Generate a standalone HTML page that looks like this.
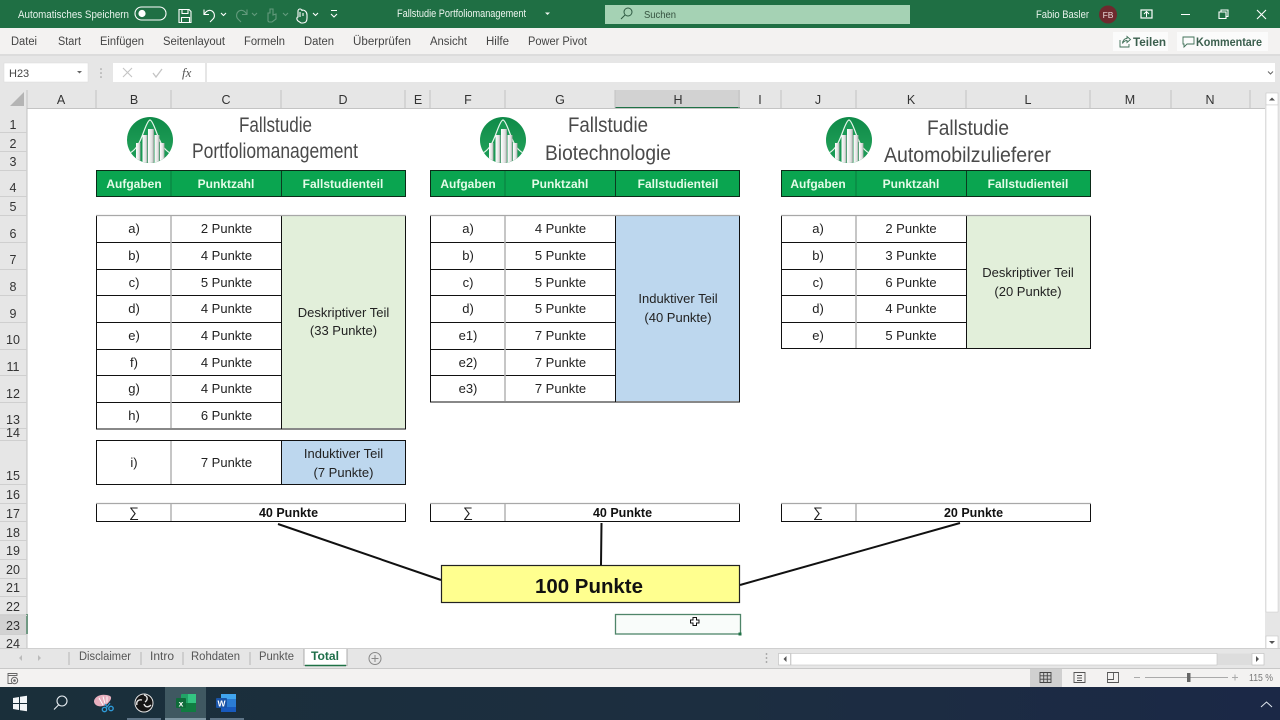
<!DOCTYPE html>
<html><head><meta charset="utf-8"><title>Fallstudie Portfoliomanagement</title>
<style>
html,body{margin:0;padding:0;width:1280px;height:720px;overflow:hidden;background:#fff}
svg{display:block}
text{font-family:"Liberation Sans",sans-serif}
.c{text-anchor:middle}
.t{font-size:13px;fill:#222;text-anchor:middle}
.b{font-size:12px;font-weight:bold;fill:#e4fbe8;text-anchor:middle}
.s{font-size:12.5px;font-weight:bold;fill:#111;text-anchor:middle}
.h{font-size:12.5px;fill:#333;text-anchor:middle}
.m{font-size:11.5px;fill:#444}
.tt{font-size:21px;fill:#4a4a4a}
.w{fill:none;stroke:#fff;stroke-width:1.1}
</style></head><body>
<svg width="1280" height="720" viewBox="0 0 1280 720" xmlns="http://www.w3.org/2000/svg">
<defs>
<linearGradient id="lg" x1="0" y1="0" x2="0" y2="1"><stop offset="0" stop-color="#0e8a48"/><stop offset="1" stop-color="#26a55c"/></linearGradient>
<linearGradient id="bar" x1="0" y1="0" x2="1" y2="0"><stop offset="0" stop-color="#fff"/><stop offset=".7" stop-color="#ddd"/><stop offset="1" stop-color="#8a9a90"/></linearGradient>
<linearGradient id="tb" x1="0" y1="0" x2="1" y2="0"><stop offset="0" stop-color="#1a2f3a"/><stop offset=".55" stop-color="#1c2e40"/><stop offset="1" stop-color="#1b2846"/></linearGradient>
<clipPath id="cp"><circle cx="0" cy="0" r="23"/></clipPath>
<g id="logo">
<circle r="23" fill="url(#lg)"/>
<g clip-path="url(#cp)">
<path d="M-23 16 C-14 10 -10 2 -6 -9 C-3 -17 -1 -20 0 -20 C1 -20 3 -17 6 -9 C10 2 14 10 23 16 L23 24 L-23 24Z" fill="#1a9a55"/>
<path d="M-20 13 C-13 9 -10 2 -6 -9 C-3 -17 -1 -20 0 -20 C1 -20 3 -17 6 -9 C10 2 13 9 20 13" fill="none" stroke="#e8f6ec" stroke-width="1.2"/>
<rect x="-14" y="3" width="4.5" height="20" fill="url(#bar)"/>
<rect x="-7.5" y="-5" width="5" height="28" fill="url(#bar)"/>
<rect x="-2" y="-11" width="6" height="34" fill="url(#bar)"/>
<rect x="4.5" y="-5" width="5" height="28" fill="url(#bar)"/>
<rect x="10" y="3" width="4.5" height="20" fill="url(#bar)"/>
</g></g>
</defs>

<!-- chrome backgrounds -->
<rect width="1280" height="28" fill="#1f6f44"/>
<rect y="28" width="1280" height="26" fill="#f3f2f1"/>
<rect y="54" width="1280" height="54" fill="#e6e6e6"/>
<rect y="54" width="1280" height="2" fill="#dcdcdc"/>

<!-- title bar -->
<text x="18" y="18" font-size="11" fill="#e8f3ec" textLength="111" lengthAdjust="spacingAndGlyphs">Automatisches Speichern</text>
<rect x="135" y="7" width="31" height="13" rx="6.5" fill="none" stroke="#fff" stroke-width="1.1"/>
<circle cx="142" cy="13.5" r="3.6" fill="#fff"/>
<path class="w" d="M179 9.5h10l2 2v11h-12z M182 9.5v4h6v-4 M181.500 22.500v-5h8v5"/>
<path class="w" stroke-width="1.3" d="M204 9.500v5h5 M204.500 14c2-3.500 5-4.500 7.500-3 3 2 3 6 1 8l-3 3"/>
<path class="w" d="M221 13l2.500 2.500 2.500-2.500"/>
<g opacity=".3"><path class="w" d="M247 9.500v5h-5 M246.500 14c-2-3.500-5-4.500-7.500-3-3 2-3 6-1 8l3 3"/><path class="w" d="M252 13l2.500 2.500 2.500-2.500"/>
<path class="w" d="M268 21v-8h2v-4h3v6l3-1v5l-4 3h-3z"/><path class="w" d="M283 13l2.500 2.500 2.500-2.500"/></g>
<path class="w" d="M298 21c-2-2-1-4 0-4v-6a2 2 0 0 1 4 0l0-1c3 0 5 2 5 5v3c0 3-1 5-4 5h-2z M300 12v5 M303 13v3"/>
<path class="w" d="M313 13l2.500 2.500 2.500-2.500"/>
<path class="w" d="M331 10.500h6 M331 14l3 3 3-3"/>
<text x="397" y="17" font-size="11" fill="#eef6f0" textLength="129" lengthAdjust="spacingAndGlyphs">Fallstudie Portfoliomanagement</text>
<path d="M545 12.500h5l-2.500 2.500z" fill="#eef6f0"/>
<rect x="605" y="5" width="305" height="19" fill="#a5d2b4"/>
<circle cx="628" cy="12" r="4" fill="none" stroke="#2e5a42" stroke-width="1"/><path d="M625 15l-4 4" stroke="#2e5a42" stroke-width="1"/>
<text x="644" y="18" font-size="10.500" fill="#35513f" textLength="32" lengthAdjust="spacingAndGlyphs">Suchen</text>
<text x="1036" y="18" font-size="11" fill="#e8f3ec" textLength="53" lengthAdjust="spacingAndGlyphs">Fabio Basler</text>
<circle cx="1108" cy="14.500" r="9" fill="#6e2a2e"/>
<text x="1108" y="18" class="c" font-size="8.500" fill="#eadada">FB</text>
<rect x="1141" y="10" width="11" height="8" fill="none" stroke="#fff" stroke-width="1.2"/><path d="M1146.500 17v-5M1144 14l2.500-2.500 2.500 2.500" fill="none" stroke="#fff" stroke-width="1"/>
<path d="M1181 14.500h9" stroke="#fff" stroke-width="1"/>
<path class="w" d="M1219 12h7v6.500h-7z M1221 12v-2h7v6.500h-2"/>
<path class="w" d="M1257 10l9 9M1266 10l-9 9" stroke-width="1.1"/>

<!-- ribbon tabs -->
<g font-size="11.500" fill="#444">
<text x="11" y="45" textLength="26" lengthAdjust="spacingAndGlyphs">Datei</text>
<text x="58" y="45" textLength="23" lengthAdjust="spacingAndGlyphs">Start</text>
<text x="100" y="45" textLength="44" lengthAdjust="spacingAndGlyphs">Einfügen</text>
<text x="163" y="45" textLength="62" lengthAdjust="spacingAndGlyphs">Seitenlayout</text>
<text x="244" y="45" textLength="41" lengthAdjust="spacingAndGlyphs">Formeln</text>
<text x="304" y="45" textLength="30" lengthAdjust="spacingAndGlyphs">Daten</text>
<text x="353" y="45" textLength="58" lengthAdjust="spacingAndGlyphs">Überprüfen</text>
<text x="430" y="45" textLength="37" lengthAdjust="spacingAndGlyphs">Ansicht</text>
<text x="486" y="45" textLength="23" lengthAdjust="spacingAndGlyphs">Hilfe</text>
<text x="528" y="45" textLength="59" lengthAdjust="spacingAndGlyphs">Power Pivot</text>
</g>
<rect x="1113" y="32" width="55" height="19" fill="#fbfbfb"/>
<rect x="1177" y="32" width="91" height="19" fill="#fbfbfb"/>
<path d="M1120 40v7h9v-3 M1122.500 43.500c0-3 2-5 4.500-5v-2l3.500 3-3.500 3v-2c-2 0-3.500 1-4.500 3" fill="none" stroke="#3f6f57" stroke-width=".9"/>
<text x="1133" y="46" font-size="12" font-weight="bold" fill="#3b5f4e" textLength="33" lengthAdjust="spacingAndGlyphs">Teilen</text>
<path d="M1183 37h11v7h-7l-3 3v-3h-1z" fill="none" stroke="#3f6f57" stroke-width=".9"/>
<text x="1196" y="46" font-size="12" font-weight="bold" fill="#3b5f4e" textLength="66" lengthAdjust="spacingAndGlyphs">Kommentare</text>

<!-- formula bar -->
<rect x="4" y="63" width="84" height="19" fill="#fff" stroke="#dadada" stroke-width=".5"/>
<text x="9" y="77" font-size="11" fill="#444">H23</text>
<path d="M77 71h5l-2.500 2.500z" fill="#666"/>
<circle cx="101" cy="69" r=".8" fill="#999"/><circle cx="101" cy="73" r=".8" fill="#999"/><circle cx="101" cy="77" r=".8" fill="#999"/>
<rect x="113" y="63" width="92" height="19" fill="#fff"/>
<path d="M123 68l9 9M132 68l-9 9" stroke="#c4c4c4" stroke-width="1.100"/>
<path d="M153 73l3 4 6-8" fill="none" stroke="#c4c4c4" stroke-width="1.300"/>
<text x="182" y="77" font-size="13" fill="#555" style="font-family:'Liberation Serif',serif;font-style:italic">fx</text>
<rect x="207" y="63" width="1068" height="19" fill="#fff"/>
<path d="M1268 71.500l2.500 2.500 2.500-2.500" fill="none" stroke="#666" stroke-width="1"/>

<!-- column headers -->
<rect x="615" y="90" width="125" height="18" fill="#d2d2d2"/>
<rect x="615" y="107" width="125" height="2" fill="#1f7246"/>
<path d="M24 92v14h-14z" fill="#b4b4b4"/>
<path d="M27 90v18M96 90v18M171 90v18M281 90v18M405 90v18M430 90v18M505 90v18M615 90v18M739 90v18M781 90v18M856 90v18M966 90v18M1090 90v18M1171 90v18M1250 90v18" stroke="#c2c2c2" stroke-width="1"/>
<path d="M0 108.500H1265" stroke="#c4c4c4" stroke-width="1"/>
<g>
<text class="h" x="61" y="104">A</text><text class="h" x="134" y="104">B</text><text class="h" x="226" y="104">C</text><text class="h" x="343" y="104">D</text><text class="h" x="418" y="104">E</text><text class="h" x="468" y="104">F</text><text class="h" x="560" y="104">G</text><text class="h" x="678" y="104">H</text><text class="h" x="760" y="104">I</text><text class="h" x="818" y="104">J</text><text class="h" x="911" y="104">K</text><text class="h" x="1028" y="104">L</text><text class="h" x="1130" y="104">M</text><text class="h" x="1210" y="104">N</text>
</g>

<!-- row headers -->
<rect y="108" width="27" height="543" fill="#e6e6e6"/>
<rect y="614" width="27" height="20" fill="#d2d2d2"/>
<rect x="26" y="614" width="2" height="20" fill="#1f7246"/>
<path d="M27 108v543" stroke="#c0c0c0"/>
<path d="M0 132.500h27M0 151.500h27M0 170.500h27M0 196.500h27M0 215.500h27M0 242.500h27M0 269.500h27M0 295.500h27M0 322.500h27M0 349.500h27M0 375.500h27M0 402.500h27M0 428.500h27M0 440.500h27M0 484.500h27M0 503.500h27M0 521.500h27M0 540.500h27M0 559.500h27M0 578.500h27M0 596.500h27M0 615.500h27M0 634.500h27" stroke="#cfcfcf"/>
<g>
<text class="h" x="13" y="129">1</text><text class="h" x="13" y="148">2</text><text class="h" x="13" y="166">3</text><text class="h" x="13" y="192">4</text><text class="h" x="13" y="211">5</text><text class="h" x="13" y="238">6</text><text class="h" x="13" y="264">7</text><text class="h" x="13" y="291">8</text><text class="h" x="13" y="318">9</text><text class="h" x="13" y="344">10</text><text class="h" x="13" y="371">11</text><text class="h" x="13" y="398">12</text><text class="h" x="13" y="424">13</text><text class="h" x="13" y="437">14</text><text class="h" x="13" y="480">15</text><text class="h" x="13" y="499">16</text><text class="h" x="13" y="518">17</text><text class="h" x="13" y="537">18</text><text class="h" x="13" y="555">19</text><text class="h" x="13" y="574">20</text><text class="h" x="13" y="592">21</text><text class="h" x="13" y="611">22</text><text class="h" x="13" y="630">23</text><text class="h" x="13" y="648">24</text>
</g>

<!-- titles & logos -->
<use href="#logo" x="150" y="140"/>
<use href="#logo" x="503" y="140"/>
<use href="#logo" x="849" y="140"/>
<text class="tt" x="239" y="132" textLength="73" lengthAdjust="spacingAndGlyphs">Fallstudie</text>
<text class="tt" x="192" y="158" textLength="166" lengthAdjust="spacingAndGlyphs">Portfoliomanagement</text>
<text class="tt" x="568" y="132" textLength="80" lengthAdjust="spacingAndGlyphs">Fallstudie</text>
<text class="tt" x="545" y="160" textLength="126" lengthAdjust="spacingAndGlyphs">Biotechnologie</text>
<text class="tt" x="927" y="135" textLength="82" lengthAdjust="spacingAndGlyphs">Fallstudie</text>
<text class="tt" x="884" y="162" textLength="167" lengthAdjust="spacingAndGlyphs">Automobilzulieferer</text>

<!-- headers -->
<g fill="#0aa550" stroke="#0b2b18" stroke-width="1">
<rect x="96.500" y="170.500" width="309" height="26"/><rect x="430.500" y="170.500" width="309" height="26"/><rect x="781.500" y="170.500" width="309" height="26"/>
</g>
<path d="M171 171v25M505 171v25M856 171v25" stroke="#0b8a44" stroke-width="1.500"/>
<path d="M281.500 171v25M615.500 171v25M966.500 171v25" stroke="#0b3b20" stroke-width="1"/>
<g>
<text class="b" x="134" y="188">Aufgaben</text><text class="b" x="226" y="188">Punktzahl</text><text class="b" x="343" y="188">Fallstudienteil</text>
<text class="b" x="468" y="188">Aufgaben</text><text class="b" x="560" y="188">Punktzahl</text><text class="b" x="678" y="188">Fallstudienteil</text>
<text class="b" x="818" y="188">Aufgaben</text><text class="b" x="911" y="188">Punktzahl</text><text class="b" x="1028" y="188">Fallstudienteil</text>
</g>

<!-- fills -->
<rect x="282" y="216" width="123" height="212" fill="#e2efda"/>
<rect x="616" y="216" width="123" height="185" fill="#bdd7ee"/>
<rect x="967" y="216" width="123" height="132" fill="#e2efda"/>
<rect x="282" y="441" width="123" height="43" fill="#bdd7ee"/>

<!-- table lines -->
<g fill="none" stroke="#111" stroke-width="1">
<path d="M96.500 215v214H405.500V215M281.500 215v214M97 242.500h184M97 269.500h184M97 295.500h184M97 322.500h184M97 349.500h184M97 375.500h184M97 402.500h184"/>
<rect x="96.500" y="440.500" width="309" height="44"/><path d="M281.500 441v43"/>
<path d="M96.500 522V503M96.500 521.500H405.500V503"/>
<path d="M430.500 215v187H739.500V215M615.500 215v187M431 242.500h184M431 269.500h184M431 295.500h184M431 322.500h184M431 349.500h184M431 375.500h184"/>
<path d="M430.500 522V503M430.500 521.500H739.500V503"/>
<path d="M781.500 215v133.500H1090.500V215M966.500 215v133M782 242.500h184M782 269.500h184M782 295.500h184M782 322.500h184"/>
<path d="M781.500 522V503M781.500 521.500H1090.500V503"/>
</g>
<g stroke="#a8a8a8" stroke-width="1.200" fill="none">
<path d="M96 215.500H406M430 215.500H740M781 215.500H1091M96 503.500H406M430 503.500H740M781 503.500H1091"/>
</g>
<g stroke="#b4b4b4" stroke-width="1.500" fill="none">
<path d="M171 216v212M171 441v43M171 504v17M505 216v185M505 504v17M856 216v132M856 504v17"/>
</g>

<!-- table 1 text -->
<g>
<text class="t" x="134" y="233">a)</text><text class="t" x="226.500" y="233">2 Punkte</text>
<text class="t" x="134" y="260">b)</text><text class="t" x="226.500" y="260">4 Punkte</text>
<text class="t" x="134" y="287">c)</text><text class="t" x="226.500" y="287">5 Punkte</text>
<text class="t" x="134" y="313">d)</text><text class="t" x="226.500" y="313">4 Punkte</text>
<text class="t" x="134" y="340">e)</text><text class="t" x="226.500" y="340">4 Punkte</text>
<text class="t" x="134" y="367">f)</text><text class="t" x="226.500" y="367">4 Punkte</text>
<text class="t" x="134" y="393">g)</text><text class="t" x="226.500" y="393">4 Punkte</text>
<text class="t" x="134" y="420">h)</text><text class="t" x="226.500" y="420">6 Punkte</text>
<text class="t" x="134" y="467">i)</text><text class="t" x="226.500" y="467">7 Punkte</text>
<text class="t" x="343.500" y="317">Deskriptiver Teil</text><text class="t" x="343.500" y="335">(33 Punkte)</text>
<text class="t" x="343.500" y="458">Induktiver Teil</text><text class="t" x="343.500" y="477">(7 Punkte)</text>
<text class="t" x="134" y="517" style="font-size:14px">∑</text><text class="s" x="288.500" y="517">40 Punkte</text>
</g>
<!-- table 2 text -->
<g>
<text class="t" x="468" y="233">a)</text><text class="t" x="560.500" y="233">4 Punkte</text>
<text class="t" x="468" y="260">b)</text><text class="t" x="560.500" y="260">5 Punkte</text>
<text class="t" x="468" y="287">c)</text><text class="t" x="560.500" y="287">5 Punkte</text>
<text class="t" x="468" y="313">d)</text><text class="t" x="560.500" y="313">5 Punkte</text>
<text class="t" x="468" y="340">e1)</text><text class="t" x="560.500" y="340">7 Punkte</text>
<text class="t" x="468" y="367">e2)</text><text class="t" x="560.500" y="367">7 Punkte</text>
<text class="t" x="468" y="393">e3)</text><text class="t" x="560.500" y="393">7 Punkte</text>
<text class="t" x="678" y="303">Induktiver Teil</text><text class="t" x="678" y="322">(40 Punkte)</text>
<text class="t" x="468" y="517" style="font-size:14px">∑</text><text class="s" x="622.500" y="517">40 Punkte</text>
</g>
<!-- table 3 text -->
<g>
<text class="t" x="818" y="233">a)</text><text class="t" x="911" y="233">2 Punkte</text>
<text class="t" x="818" y="260">b)</text><text class="t" x="911" y="260">3 Punkte</text>
<text class="t" x="818" y="287">c)</text><text class="t" x="911" y="287">6 Punkte</text>
<text class="t" x="818" y="313">d)</text><text class="t" x="911" y="313">4 Punkte</text>
<text class="t" x="818" y="340">e)</text><text class="t" x="911" y="340">5 Punkte</text>
<text class="t" x="1028" y="277">Deskriptiver Teil</text><text class="t" x="1028" y="296">(20 Punkte)</text>
<text class="t" x="818" y="517" style="font-size:14px">∑</text><text class="s" x="973.500" y="517">20 Punkte</text>
</g>

<!-- connector & total -->
<path d="M278 524L441 580M601.500 523L601 565M740 585L960 523" stroke="#111" stroke-width="2" fill="none"/>
<rect x="441.500" y="565.500" width="298" height="37" fill="#ffff8f" stroke="#222" stroke-width="1.200"/>
<text x="589" y="593" class="c" font-size="20" font-weight="bold" fill="#111" textLength="108" lengthAdjust="spacingAndGlyphs">100 Punkte</text>

<!-- selected cell -->
<rect x="615.500" y="614.500" width="125" height="19.500" fill="#f9fcfa" stroke="#4f8569" stroke-width="1.300"/>
<rect x="738.500" y="632.500" width="3" height="3" fill="#1f7246"/>
<path d="M693 617.500h3.500v2.500h2.500v3h-2.500v2.500h-3.500v-2.500h-2.500v-3h2.500z" fill="#fff" stroke="#111" stroke-width="1"/>

<!-- vertical scrollbar -->
<rect x="1265" y="90" width="15" height="561" fill="#e6e6e6"/>
<rect x="1266" y="93" width="12" height="12" fill="#fff" stroke="#bbb" stroke-width=".5"/>
<path d="M1269 100.500h6l-3-3z" fill="#555"/>
<rect x="1266" y="105" width="12" height="507" fill="#fff" stroke="#c8c8c8" stroke-width=".5"/>
<rect x="1266" y="636" width="12" height="13" fill="#fff" stroke="#bbb" stroke-width=".5"/>
<path d="M1269 641h6l-3 3z" fill="#555"/>

<!-- sheet tabs -->
<rect y="649" width="1280" height="19" fill="#e6e6e6"/>
<path d="M0 648.500H1280" stroke="#cfcfcf"/>
<path d="M0 668.500H1280" stroke="#c8c8c8"/>
<path d="M22 658l-3 3 3 3z" fill="#bbb" transform="translate(0,-3)"/><path d="M38 658l3 3-3 3z" fill="#bbb" transform="translate(0,-3)"/>
<path d="M69 652v13M141 652v13M183 652v13M250 652v13" stroke="#b5b5b5"/>
<rect x="304" y="649" width="43" height="16.500" fill="#fff"/>
<path d="M304 649v16.500h43V649" fill="none" stroke="#9a9a9a" stroke-width=".8"/>
<path d="M305 665.500h41" stroke="#1f7246" stroke-width="1.500"/>
<text x="79" y="660" font-size="11.500" fill="#555" textLength="52" lengthAdjust="spacingAndGlyphs">Disclaimer</text>
<text x="150" y="660" font-size="11.500" fill="#555" textLength="24" lengthAdjust="spacingAndGlyphs">Intro</text>
<text x="191" y="660" font-size="11.500" fill="#555" textLength="49" lengthAdjust="spacingAndGlyphs">Rohdaten</text>
<text x="259" y="660" font-size="11.500" fill="#555" textLength="35" lengthAdjust="spacingAndGlyphs">Punkte</text>
<text x="311" y="660" font-size="11.500" font-weight="bold" fill="#1f6f4a" textLength="28" lengthAdjust="spacingAndGlyphs">Total</text>
<circle cx="375" cy="658.500" r="6" fill="none" stroke="#888" stroke-width="1"/><path d="M371.500 658.500h7M375 655v7" stroke="#888"/>
<circle cx="766.500" cy="654" r=".9" fill="#999"/><circle cx="766.500" cy="658" r=".9" fill="#999"/><circle cx="766.500" cy="662" r=".9" fill="#999"/>
<rect x="778.500" y="653.500" width="473" height="11.500" fill="#ddd"/>
<rect x="778.500" y="653.500" width="12" height="11.500" fill="#fff" stroke="#bbb" stroke-width=".6"/>
<path d="M786.500 656v6l-3-3z" fill="#555"/>
<rect x="791" y="653.500" width="426" height="11.500" fill="#fff" stroke="#c4c4c4" stroke-width=".6"/>
<rect x="1252" y="653.500" width="12" height="11.500" fill="#fff" stroke="#bbb" stroke-width=".6"/>
<path d="M1256 656v6l3-3z" fill="#555"/>

<!-- status bar -->
<rect y="669" width="1280" height="18" fill="#f3f2f1"/>
<path d="M8 673.500h9v2h-9zM8 675.500v8h4" fill="none" stroke="#666" stroke-width=".9"/>
<circle cx="14.500" cy="680.500" r="3.200" fill="none" stroke="#666"/><circle cx="14.500" cy="680.500" r="1.300" fill="#666"/>
<rect x="1030" y="669" width="32" height="18" fill="#d0d0d0"/>
<path d="M1040 672.500h11v10h-11zM1043.700 672.500v10M1047.300 672.500v10M1040 675.800h11M1040 679.200h11" fill="none" stroke="#444" stroke-width=".9"/>
<path d="M1074 672.500h11v10h-11zM1077 675.500h5M1077 678h5M1077 680.500h5" fill="none" stroke="#555" stroke-width=".9"/>
<path d="M1107.500 672.500h11v10h-11zM1107.500 679.500h6v-7" fill="none" stroke="#555" stroke-width=".9"/>
<path d="M1134 677.500h6M1232 677.500h6M1235 674.500v6" stroke="#aaa" stroke-width="1"/>
<path d="M1145 677.500h83" stroke="#aaa" stroke-width="1"/>
<rect x="1187" y="673" width="3.500" height="9" fill="#666"/>
<text x="1249" y="681" font-size="10.500" fill="#777" textLength="24" lengthAdjust="spacingAndGlyphs">115 %</text>

<!-- taskbar -->
<rect y="687" width="1280" height="33" fill="url(#tb)"/>
<rect x="165" y="687" width="41" height="33" fill="#3f5861"/>
<rect x="127" y="718" width="34" height="2" fill="#5e7486"/><rect x="165" y="718" width="41" height="2" fill="#7f97a3"/><rect x="210" y="718" width="34" height="2" fill="#5e7486"/>
<path d="M13 698l6-1v6h-6zM20 696.800l7-1v7.200h-7zM13 704h6v6l-6-1zM20 704h7v7.200l-7-1z" fill="#f2f5f7"/>
<circle cx="62" cy="701" r="5" fill="none" stroke="#e8eef2" stroke-width="1.100"/><path d="M58.500 705l-4.500 4.500" stroke="#e8eef2" stroke-width="1.100"/>
<path d="M94 701c1-5 8-8 16-5 2 1 1 4-1 6-3 4-8 5-11 4-3-1-4-3-4-5z" fill="#e8b0bf"/>
<path d="M99 698l4 7M103 696.500l2 7M107 696.500l0 6" stroke="#fff" stroke-width=".9"/>
<path d="M105 704l2 3 3-4" fill="none" stroke="#2f9bd8" stroke-width="1.200"/>
<circle cx="104.500" cy="709.500" r="2.200" fill="none" stroke="#2f9bd8" stroke-width="1.400"/><circle cx="111" cy="708.500" r="2.200" fill="none" stroke="#2f9bd8" stroke-width="1.400"/>
<circle cx="144" cy="703" r="9" fill="#151515" stroke="#e5e5e5" stroke-width="1"/>
<path d="M144 695c4 1 4 5 1 7M151 705c-3 3-6 2-7-1M137 705c-1-3 1-6 5-5" fill="none" stroke="#e5e5e5" stroke-width="1.400"/>
<rect x="181" y="694" width="15" height="18" rx="1" fill="#21a366"/>
<rect x="181" y="703" width="15" height="9" fill="#107c41"/><rect x="188" y="694" width="8" height="9" fill="#33c481"/>
<rect x="176" y="698" width="10" height="10" rx="1" fill="#0f6b3a"/>
<text x="181" y="706.500" class="c" font-size="8.500" font-weight="bold" fill="#fff">x</text>
<rect x="221" y="694" width="15" height="18" rx="1" fill="#2b7cd3"/>
<rect x="221" y="694" width="15" height="5" fill="#41a5ee"/><rect x="221" y="707" width="15" height="5" fill="#185abd"/>
<rect x="216" y="698" width="11" height="10" rx="1" fill="#1a55a8"/>
<text x="221.500" y="706.500" class="c" font-size="8.500" font-weight="bold" fill="#fff">W</text>
<path d="M1261 707l5.500-5 5.500 5" fill="none" stroke="#dfe6ee" stroke-width="1"/>
</svg>
</body></html>
